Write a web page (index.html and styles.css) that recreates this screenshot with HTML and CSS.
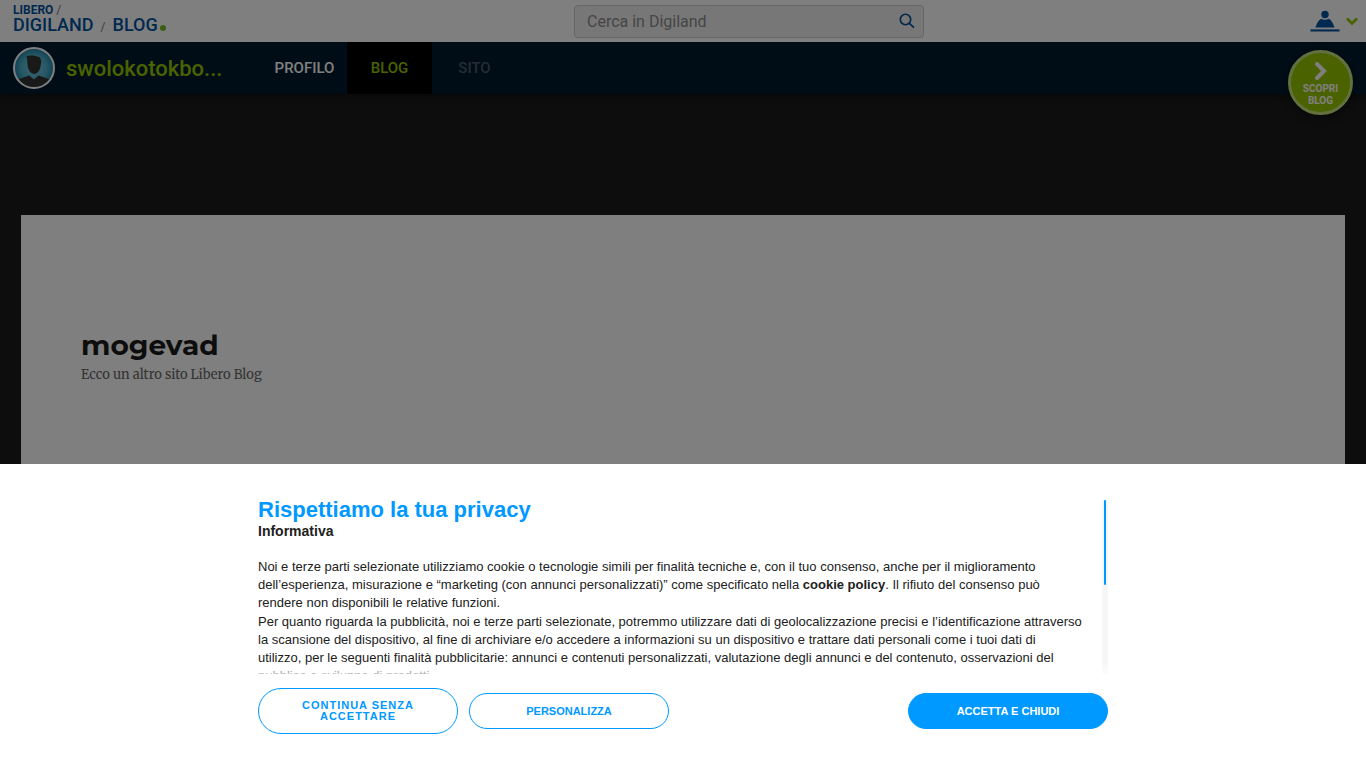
FILE: index.html
```html
<!DOCTYPE html>
<html lang="it">
<head>
  <meta charset="UTF-8">
  <meta name="viewport" content="width=device-width, initial-scale=1.0">
  <title>mogevad</title>
  <link rel="stylesheet" href="styles.css">
</head>
<body>
  <header class="topbar">
    <div class="brand">
      <div class="brand-top"><a href="#">LIBERO</a> <span>/</span></div>
      <div class="brand-main">
        <a href="#">DIGILAND</a>
        <span class="slash">/</span>
        <a href="#">BLOG</a><span class="dot"></span>
      </div>
    </div>
    <form class="search">
      <input type="text" aria-label="Cerca in Digiland" placeholder="Cerca in Digiland">
      <button type="button" aria-label="Cerca">
        <svg width="16" height="16" viewBox="0 0 16 16" fill="none" stroke="#004a93" stroke-width="1.6">
          <circle cx="6.5" cy="6.5" r="5.2"/>
          <path d="M10.3 10.3L15 14.6"/>
        </svg>
      </button>
    </form>
    <button class="account" type="button" aria-label="Account">
      <svg width="30" height="22" viewBox="0 0 30 22" fill="#00529f">
        <circle cx="15" cy="4.5" r="3.7"/>
        <path d="M5.5 17.6C6.8 13.5 8.7 9.6 11.5 8.8C13.2 10.2 16.8 10.2 18.5 8.8C21.3 9.6 23.2 13.5 24.5 17.6Z"/>
        <path d="M0.5 19.4H29.5V21.5H0.5Z"/>
      </svg>
      <svg width="12" height="9" viewBox="0 0 12 9" fill="none" stroke="#94c500" stroke-width="2.8">
        <path d="M1 1.5L6 6.5L11 1.5"/>
      </svg>
    </button>
  </header>

  <nav class="userbar">
    <a class="user" href="#">
      <svg class="avatar" width="42" height="42" viewBox="0 0 42 42">
        <defs>
          <radialGradient id="sky">
            <stop offset="0" stop-color="#7cc8da"/>
            <stop offset="0.6" stop-color="#4fb2cd"/>
            <stop offset="1" stop-color="#1f84a5"/>
          </radialGradient>
          <clipPath id="round"><circle cx="21" cy="21" r="19.5"/></clipPath>
        </defs>
        <circle cx="21" cy="21" r="20" fill="url(#sky)"/>
        <g clip-path="url(#round)">
          <path d="M5 42V33C8 30.5 13 30 16 28.5L21 32.5L25.5 28.5C29 30 34 30.5 37 33V42Z" fill="#333"/>
          <path d="M13.5 9C17 8 23 8.5 26 10C28.5 11.5 28.8 15 27.5 19C27.2 23 24.5 27 21.5 27C18 27 15 23 14.5 18C14.2 15 14.5 12 13.5 9Z" fill="#333"/>
        </g>
        <circle cx="21" cy="21" r="20" fill="none" stroke="#fff" stroke-width="2"/>
      </svg>
      <span>swolokotokbo...</span>
    </a>
    <ul class="tabs">
      <li><a href="#">PROFILO</a></li>
      <li><a class="active" href="#">BLOG</a></li>
      <li><a class="disabled" href="#">SITO</a></li>
    </ul>
  </nav>

  <a class="discover" href="#">
    <svg width="14" height="20" viewBox="0 0 14 20" fill="none" stroke="#fff" stroke-width="4" stroke-linecap="round">
      <path d="M3 3L10 10L3 17"/>
    </svg>
    <span>SCOPRI</span>
    <span>BLOG</span>
  </a>

  <main class="site">
    <h1><a href="#">mogevad</a></h1>
    <p>Ecco un altro sito Libero Blog</p>
  </main>

  <div class="overlay"></div>

  <section class="privacy" role="dialog" aria-labelledby="privacyTitle">
    <div class="privacy-inner">
      <div class="privacy-scroll">
        <div class="privacy-text">
          <h2 id="privacyTitle">Rispettiamo la tua privacy</h2>
          <h3>Informativa</h3>
          <p>Noi e terze parti selezionate utilizziamo cookie o tecnologie simili per finalità tecniche e, con il tuo consenso, anche per il miglioramento dell’esperienza, misurazione e “marketing (con annunci personalizzati)” come specificato nella <a href="#">cookie policy</a>. Il rifiuto del consenso può<br>rendere non disponibili le relative funzioni.</p>
          <p>Per quanto riguarda la pubblicità, noi e terze parti selezionate, potremmo utilizzare dati di geolocalizzazione precisi e l’identificazione attraverso la scansione del dispositivo, al fine di archiviare e/o accedere a informazioni su un dispositivo e trattare dati personali come i tuoi dati di<br>utilizzo, per le seguenti finalità pubblicitarie: annunci e contenuti personalizzati, valutazione degli annunci e del contenuto, osservazioni del<br>pubblico e sviluppo di prodotti.</p>
        </div>
        <div class="track"><div class="thumb"></div></div>
        <div class="fade"></div>
      </div>
      <div class="privacy-buttons">
        <button class="btn spaced" type="button">CONTINUA SENZA ACCETTARE</button>
        <button class="btn" type="button">PERSONALIZZA</button>
        <button class="btn primary" type="button">ACCETTA E CHIUDI</button>
      </div>
    </div>
  </section>
</body>
</html>
```

FILE: styles.css
```css
* {
  box-sizing: border-box;
}
body {
  display: flex;
  flex-direction: column;
  min-height: 100vh;
  margin: 0;
  background: #1a1a1a;
  font-family: Roboto, Arial, sans-serif;
}
a {
  color: inherit;
  text-decoration: none;
}
button {
  border: none;
  background: none;
  cursor: pointer;
}

/* top bar */
.topbar {
  display: flex;
  align-items: center;
  justify-content: space-between;
  height: 42px;
  padding: 0 8px 0 13px;
  background: #fff;
}
.brand {
  width: 175px;
  padding-bottom: 2px;
  color: #00529f;
}
.brand-top {
  font-size: 12px;
  font-weight: 700;
  line-height: 12px;
}
.brand-top span,
.slash {
  color: #777;
  font-weight: 400;
}
.brand-main {
  display: flex;
  align-items: baseline;
  font-size: 18px;
  font-weight: 500;
  line-height: 18px;
}
.slash {
  margin: 0 7px;
  font-size: 12px;
}
.dot {
  width: 6px;
  height: 6px;
  margin-left: 2px;
  border-radius: 50%;
  background: #7ab929;
}
.search {
  display: flex;
  align-items: center;
  width: 350px;
  height: 33px;
  border: 1px solid #ccc;
  border-radius: 4px;
  background: #eee;
}
.search input {
  flex: 1;
  min-width: 0;
  padding: 0 12px;
  border: none;
  outline: none;
  background: none;
  font-family: Roboto, Arial, sans-serif;
  font-size: 16px;
}
.search input::placeholder {
  color: #8c8c8c;
}
.search button {
  display: flex;
  padding: 0 8px;
}
.account {
  display: flex;
  align-items: center;
  gap: 6px;
  padding: 0;
}

/* user bar */
.userbar {
  display: flex;
  align-items: center;
  height: 52px;
  padding-left: 13px;
  background: #001a2e;
  box-shadow: 0 4px 4px rgba(0, 0, 0, 0.3);
}
.user {
  display: flex;
  align-items: center;
  gap: 11px;
  width: 249px;
  color: #94c500;
  font-size: 22px;
  font-weight: 500;
}
.tabs {
  display: flex;
  height: 100%;
  margin: 0;
  padding: 0;
  list-style: none;
}
.tabs a {
  display: flex;
  align-items: center;
  justify-content: center;
  width: 85px;
  height: 100%;
  color: #fff;
  font-size: 15px;
  font-weight: 500;
}
.tabs .active {
  background: #000;
  color: #94c500;
}
.tabs .disabled {
  color: #4d5966;
}

/* round badge over the bar */
.discover {
  position: absolute;
  top: 50px;
  right: 13px;
  display: flex;
  flex-direction: column;
  align-items: center;
  width: 65px;
  height: 65px;
  padding-top: 8px;
  border: 3px solid #c4df7d;
  border-radius: 50%;
  background: #94c500;
  box-shadow: 0 2px 8px rgba(0, 0, 0, 0.5);
  color: #fff;
  font-size: 10px;
  font-weight: 700;
  line-height: 12px;
}
.discover svg {
  margin-bottom: 2px;
}

/* blog page */
.site {
  flex: 1;
  margin: 121px 21px 0;
  padding: 112px 60px;
  background: #fff;
}
.site h1 {
  margin: 0;
  color: #1a1a1a;
  font-family: Montserrat, Inter, sans-serif;
  font-size: 28px;
  font-weight: 700;
  line-height: 36px;
}
.site p {
  margin: 3px 0 0;
  color: #686868;
  font-family: Merriweather, "DejaVu Serif", serif;
  font-size: 13px;
  line-height: 18px;
}

.overlay {
  position: fixed;
  inset: 0;
  background: rgba(0, 0, 0, 0.5);
}

/* privacy banner */
.privacy {
  position: fixed;
  left: 0;
  right: 0;
  bottom: 0;
  padding: 36px 20px 34px;
  background: #fff;
  color: #212121;
  font-family: "Liberation Sans", Arial, sans-serif;
}
.privacy-inner {
  max-width: 850px;
  margin: 0 auto;
}
.privacy-scroll {
  position: relative;
  display: flex;
  height: 174px;
  overflow: hidden;
}
.privacy-text {
  flex: 1;
  padding-right: 12px;
  font-size: 13px;
  line-height: 1.4;
}
.privacy-text h2 {
  margin: 0;
  color: #0099ff;
  font-size: 22px;
  line-height: 20px;
}
.privacy-text h3 {
  margin: 0 0 16px;
  font-size: 14px;
  line-height: 22px;
}
.privacy-text p {
  margin: 0;
}
.privacy-text a {
  font-weight: 700;
}
.track {
  width: 6px;
  padding: 0 2px;
  background: #f6f6f6;
}
.thumb {
  height: 85px;
  border-radius: 1px;
  background: #0099ff;
}
.fade {
  position: absolute;
  left: 0;
  right: 0;
  bottom: 0;
  height: 10px;
  background: linear-gradient(rgba(255, 255, 255, 0.2), rgba(255, 255, 255, 0.7));
}
.privacy-buttons {
  display: flex;
  align-items: center;
  gap: 11px;
  margin-top: 14px;
}
.btn {
  width: 200px;
  min-height: 36px;
  padding: 11px 36px;
  border: 1px solid #0099ff;
  border-radius: 23px;
  background: #fff;
  color: #0099ff;
  font-family: inherit;
  font-size: 11px;
  font-weight: 700;
  line-height: 11px;
}
.btn.spaced {
  letter-spacing: 1px;
}
.btn.primary {
  margin-left: auto;
  background: #0099ff;
  color: #fff;
}
```
